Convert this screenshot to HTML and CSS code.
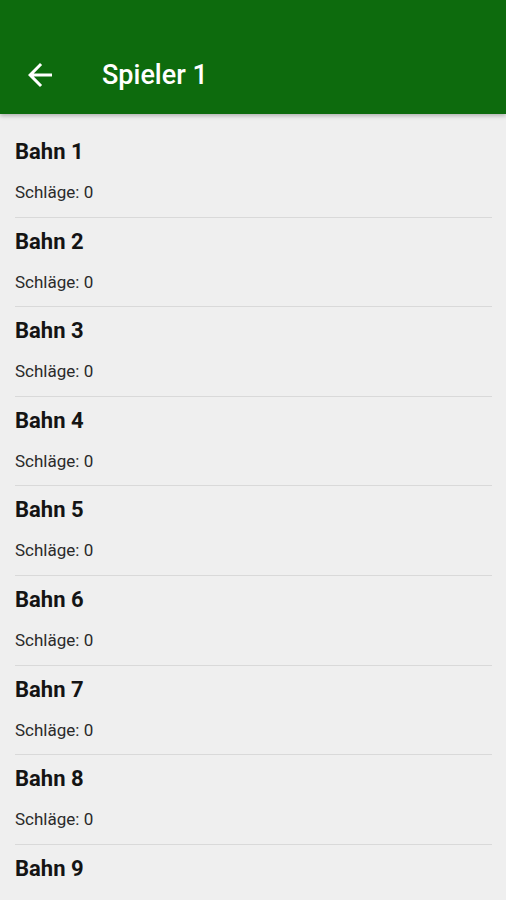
FILE: index.html
```html
<!DOCTYPE html>
<html lang="de">
<head>
    <meta charset="UTF-8">
    <meta name="viewport" content="width=device-width, initial-scale=1.0">
    <title>Spieler 1</title>
    <link rel="stylesheet" href="styles.css">
</head>
<body>
    <div class="toolbar">
        <button class="back-button" aria-label="Zurück">
            <svg viewBox="0 0 24 24" width="36" height="36">
                <path d="M20 11H7.83l5.59-5.59L12 4l-8 8 8 8 1.41-1.41L7.83 13H20v-2z" fill="#fff"/>
            </svg>
        </button>
        <h1 class="toolbar-title">Spieler 1</h1>
    </div>

    <ul class="lane-list">
        <li class="lane"><div class="lane-name">Bahn 1</div><div class="lane-strokes">Schläge: 0</div></li>
        <li class="lane"><div class="lane-name">Bahn 2</div><div class="lane-strokes">Schläge: 0</div></li>
        <li class="lane"><div class="lane-name">Bahn 3</div><div class="lane-strokes">Schläge: 0</div></li>
        <li class="lane"><div class="lane-name">Bahn 4</div><div class="lane-strokes">Schläge: 0</div></li>
        <li class="lane"><div class="lane-name">Bahn 5</div><div class="lane-strokes">Schläge: 0</div></li>
        <li class="lane"><div class="lane-name">Bahn 6</div><div class="lane-strokes">Schläge: 0</div></li>
        <li class="lane"><div class="lane-name">Bahn 7</div><div class="lane-strokes">Schläge: 0</div></li>
        <li class="lane"><div class="lane-name">Bahn 8</div><div class="lane-strokes">Schläge: 0</div></li>
        <li class="lane"><div class="lane-name">Bahn 9</div><div class="lane-strokes">Schläge: 0</div></li>
    </ul>
</body>
</html>
```

FILE: styles.css
```css
body {
    font-family: Roboto, "Liberation Sans", sans-serif;
    background-color: #efefef;
    margin: 0;
    height: 100vh;
    overflow: hidden;
}

.toolbar {
    height: 114px;
    background-color: #0d6b0d;
    display: flex;
    align-items: center;
    padding: 36px 0 0 22px;
    box-sizing: border-box;
    box-shadow: 0 2px 4px rgba(0, 0, 0, 0.25);
    position: relative;
}

.back-button {
    width: 36px;
    height: 36px;
    padding: 0;
    border: none;
    background: none;
    display: flex;
}

.toolbar-title {
    margin: 0 0 0 44px;
    color: #fff;
    font-size: 27px;
    font-weight: 500;
}

.lane-list {
    list-style: none;
    margin: 0;
    padding: 14px 14px 0 15px;
}

.lane {
    height: 89.6px;
    box-sizing: border-box;
    border-bottom: 1.5px solid #d9d9d9;
    padding-top: 10px;
}

.lane-name {
    font-size: 22px;
    font-weight: 700;
    color: #141414;
    line-height: 28px;
}

.lane-strokes {
    font-size: 17px;
    color: #2a2a2a;
    line-height: 20px;
    margin-top: 16px;
}
```
